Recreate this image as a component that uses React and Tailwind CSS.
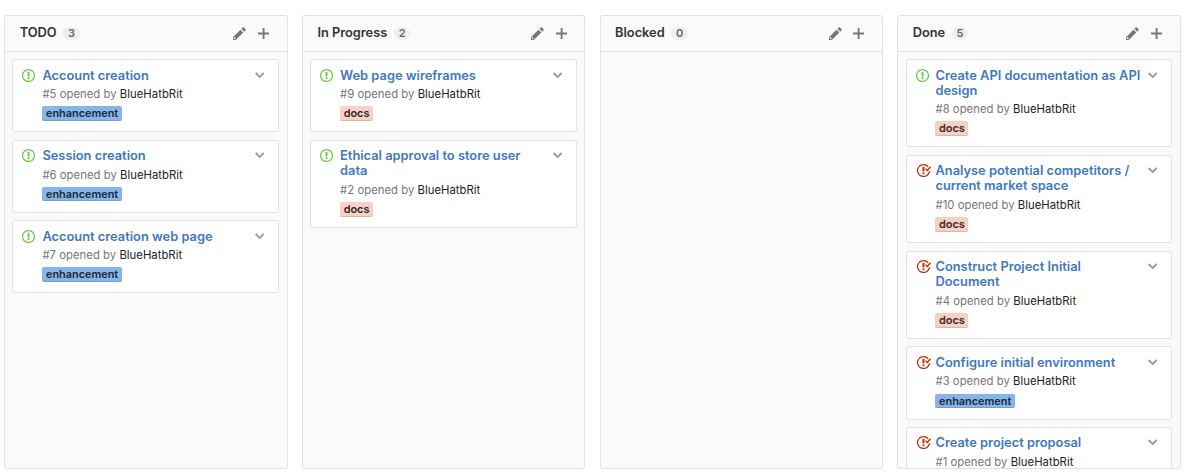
const PATHS = {
  open: 'M7 2.3c3.14 0 5.7 2.56 5.7 5.7s-2.56 5.7-5.7 5.7A5.71 5.71 0 0 1 1.3 8c0-3.14 2.56-5.7 5.7-5.7zM7 1C3.14 1 0 4.14 0 8s3.14 7 7 7 7-3.14 7-7-3.14-7-7-7zm1 3H6v5h2V4zm0 6H6v2h2v-2z',
  closed:
    'M7 10h2v2H7v-2zm2-6H7v5h2V4zm1.5 1.5l-1 1L12 9l4-4.5-1-1L12 7l-1.5-1.5zM8 13.7A5.71 5.71 0 0 1 2.3 8c0-3.14 2.56-5.7 5.7-5.7 1.83 0 3.45.88 4.5 2.2l.92-.92A6.947 6.947 0 0 0 8 1C4.14 1 1 4.14 1 8s3.14 7 7 7 7-3.14 7-7l-1.52 1.52c-.66 2.41-2.86 4.19-5.48 4.19v-.01z',
  pencil:
    'M0 12v3h3l8-8-3-3-8 8zm3 2H1v-2h1v1h1v1zm10.3-9.3L12 6 9 3l1.3-1.3a.996.996 0 0 1 1.41 0l1.59 1.59c.39.39.39 1.02 0 1.41z',
  plus: 'M12 9H7v5H5V9H0V7h5V2h2v5h5v2z',
  chevron: 'M5 11L0 6l1.5-1.5L5 8.25 8.5 4.5 10 6l-5 5z',
};

const COLUMNS = [
  {
    name: 'TODO',
    count: 3,
    cards: [
      { id: 5, title: 'Account creation', label: 'enhancement' },
      { id: 6, title: 'Session creation', label: 'enhancement' },
      { id: 7, title: 'Account creation web page', label: 'enhancement' },
    ],
  },
  {
    name: 'In Progress',
    count: 2,
    cards: [
      { id: 9, title: 'Web page wireframes', label: 'docs' },
      { id: 2, title: 'Ethical approval to store user data', label: 'docs' },
    ],
  },
  { name: 'Blocked', count: 0, cards: [] },
  {
    name: 'Done',
    count: 5,
    cards: [
      { id: 8, title: 'Create API documentation as API design', label: 'docs' },
      { id: 10, title: 'Analyse potential competitors / current market space', label: 'docs', closed: true },
      { id: 4, title: 'Construct Project Initial Document', label: 'docs', closed: true },
      { id: 3, title: 'Configure initial environment', label: 'enhancement', closed: true },
      { id: 1, title: 'Create project proposal', label: 'enhancement', closed: true },
    ],
  },
];

const LABELS = {
  enhancement: 'bg-[#84b6eb] text-[#1c2733]',
  docs: 'bg-[#f9d0c4] text-[#332a28]',
};

function Icon({ name, width, className }) {
  return (
    <svg viewBox={`0 0 ${width} 16`} className={`shrink-0 fill-current ${className}`} aria-hidden="true">
      <path d={PATHS[name]} />
    </svg>
  );
}

function Card({ id, title, label, closed }) {
  return (
    <article className="flex shrink-0 items-start rounded-[3px] border border-[#e1e1e1] bg-white pt-[7.5px] pr-[14px] pb-[10.4px] pl-[9px]">
      <div className="flex w-[19.9px] shrink-0">
        {closed ? (
          <Icon name="closed" width={16} className="h-[15px] w-[15px] text-[#bd2c00]" />
        ) : (
          <Icon name="open" width={14} className="h-[15px] w-[13.1px] text-[#6cc644]" />
        )}
      </div>
      <div className="min-w-0 flex-1">
        <a className="block text-[12.85px] leading-[15.2px] font-semibold text-[#4078c0]">{title}</a>
        <p className="mt-[3.4px] text-[11.3px] leading-[16px] tracking-[0.03px] text-[#767676]">
          #{id} opened by <span className="text-[#222]">BlueHatbRit</span>
        </p>
        <span
          className={`mt-[4.1px] block w-fit rounded-[2px] px-[3.6px] text-[10.9px] leading-[14.7px] font-semibold shadow-[inset_0_-1px_0_rgba(0,0,0,0.12)] ${LABELS[label]}`}
        >
          {label}
        </span>
      </div>
      <Icon name="chevron" width={10} className="ml-[4px] h-[15px] w-[9.4px] text-[#999]" />
    </article>
  );
}

function Column({ name, count, cards }) {
  return (
    <section className="flex h-[454px] w-[283.5px] shrink-0 flex-col overflow-hidden rounded-[3px] border border-[#e1e1e1] bg-[#fafafa]">
      <header className="flex h-[36px] shrink-0 items-center border-b border-[#e1e1e1] pr-[17.6px] pl-[14.5px]">
        <h2 className="mb-[2px] text-[12.8px] leading-[18px] font-semibold text-[#333]">{name}</h2>
        <span className="mb-[1px] ml-[6.5px] rounded-full bg-[#eee] px-[4.9px] text-[11px] leading-[13px] font-semibold text-[#666]">
          {count}
        </span>
        <Icon name="pencil" width={14} className="ml-auto h-[15px] w-[13.1px] text-[#767676]" />
        <Icon name="plus" width={12} className="ml-[11.5px] h-[15px] w-[11.2px] text-[#767676]" />
      </header>
      <div className="flex min-h-0 flex-1 flex-col gap-[7.3px] overflow-hidden px-[7.3px] pt-[7px]">
        {cards.map((card) => (
          <Card key={card.id} {...card} />
        ))}
      </div>
    </section>
  );
}

export default function App() {
  return (
    <main className="flex h-[476px] gap-[14.2px] overflow-hidden bg-white pt-[15px] pl-[4.2px] font-['Inter',sans-serif]">
      {COLUMNS.map((column) => (
        <Column key={column.name} {...column} />
      ))}
    </main>
  );
}
